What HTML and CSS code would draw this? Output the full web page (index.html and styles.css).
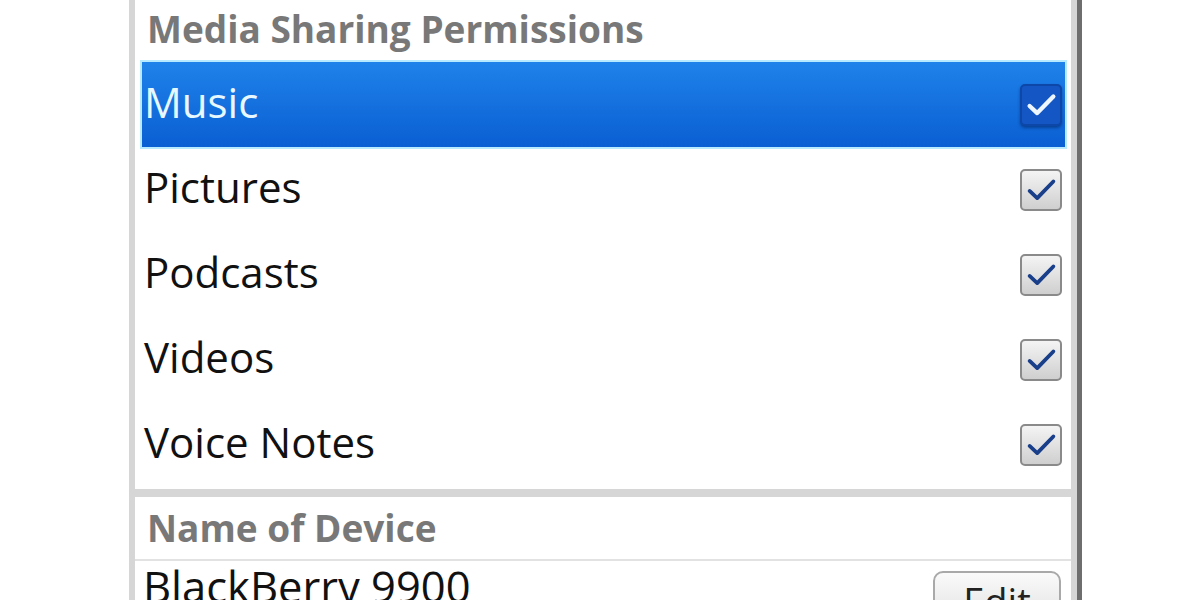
FILE: index.html
```html
<!DOCTYPE html>
<html lang="en">
<head>
  <meta charset="UTF-8">
  <title>Media Sharing</title>
  <meta name="viewport" content="width=device-width, initial-scale=1.0">
  <link rel="stylesheet" href="styles.css">
</head>
<body>
  <div class="screen">
    <div class="section">
      <div class="heading">Media Sharing Permissions</div>
      <div class="list">
        <div class="row selected">
          <span class="label">Music</span>
          <span class="check"><svg viewBox="0 0 40 40"><path d="M8 21 L16 28.5 L33 11" /></svg></span>
        </div>
        <div class="row">
          <span class="label">Pictures</span>
          <span class="check"><svg viewBox="0 0 40 40"><path d="M8 21 L16 28.5 L33 11" /></svg></span>
        </div>
        <div class="row">
          <span class="label">Podcasts</span>
          <span class="check"><svg viewBox="0 0 40 40"><path d="M8 21 L16 28.5 L33 11" /></svg></span>
        </div>
        <div class="row">
          <span class="label">Videos</span>
          <span class="check"><svg viewBox="0 0 40 40"><path d="M8 21 L16 28.5 L33 11" /></svg></span>
        </div>
        <div class="row">
          <span class="label">Voice Notes</span>
          <span class="check"><svg viewBox="0 0 40 40"><path d="M8 21 L16 28.5 L33 11" /></svg></span>
        </div>
      </div>
    </div>
    <div class="section">
      <div class="heading sub">Name of Device</div>
      <div class="device">
        <span class="label">BlackBerry 9900</span>
        <button class="edit">Edit</button>
      </div>
    </div>
  </div>
</body>
</html>
```

FILE: styles.css
```css
body { margin: 0; background: #fff; font-family: "Open Sans", "DejaVu Sans", sans-serif; overflow: hidden; }
.screen { margin-left: 129px; width: 936px; height: 600px; padding: 0 6px; background: #d6d6d6; border-right: 5px solid #6e6e6e; display: flex; flex-direction: column; gap: 8px; }
.section { background: #fff; }
.heading { height: 62px; box-sizing: border-box; padding: 4px 0 0 12px; font-size: 37px; font-weight: bold; color: #787878; line-height: 50px; }
.heading.sub { height: 64px; padding-top: 6px; border-bottom: 2px solid #e2e2e2; }
.list { padding: 0 6px 2px 7px; }
.row { height: 85px; display: flex; align-items: center; justify-content: space-between; padding: 0 3px 0 2px; }
.label { font-size: 42px; color: #111; line-height: 1; padding-bottom: 6px; }
.row.selected { background: linear-gradient(#1f82ea, #0a5fd2); box-shadow: 0 0 0 2px #b8eaff; }
.row.selected .label { color: #e8f8ff; }
.check { width: 38px; height: 38px; border: 2px solid #8a8a8a; border-radius: 5px; background: linear-gradient(#f4f4f4, #cfcfcf); display: flex; }
.check svg { width: 100%; height: 100%; }
.check path { fill: none; stroke: #1a3f8a; stroke-width: 4; stroke-linecap: round; stroke-linejoin: round; }
.row.selected .check { background: #1456c4; border-color: #0d47a8; box-shadow: 0 2px 3px rgba(0, 30, 90, 0.5); }
.row.selected .check path { stroke: #eef7ff; stroke-width: 4.5; }
.device { height: 80px; display: flex; justify-content: space-between; align-items: flex-start; padding: 4px 10px 0 8px; }
.device .label { font-size: 43.5px; padding: 0; }
.edit { margin-top: 6px; width: 128px; height: 60px; border: 2px solid #a9a9a9; border-radius: 10px; background: linear-gradient(#fafafa, #dedede); font-family: inherit; font-size: 38px; color: #222; padding: 0; line-height: 54px; }
```
